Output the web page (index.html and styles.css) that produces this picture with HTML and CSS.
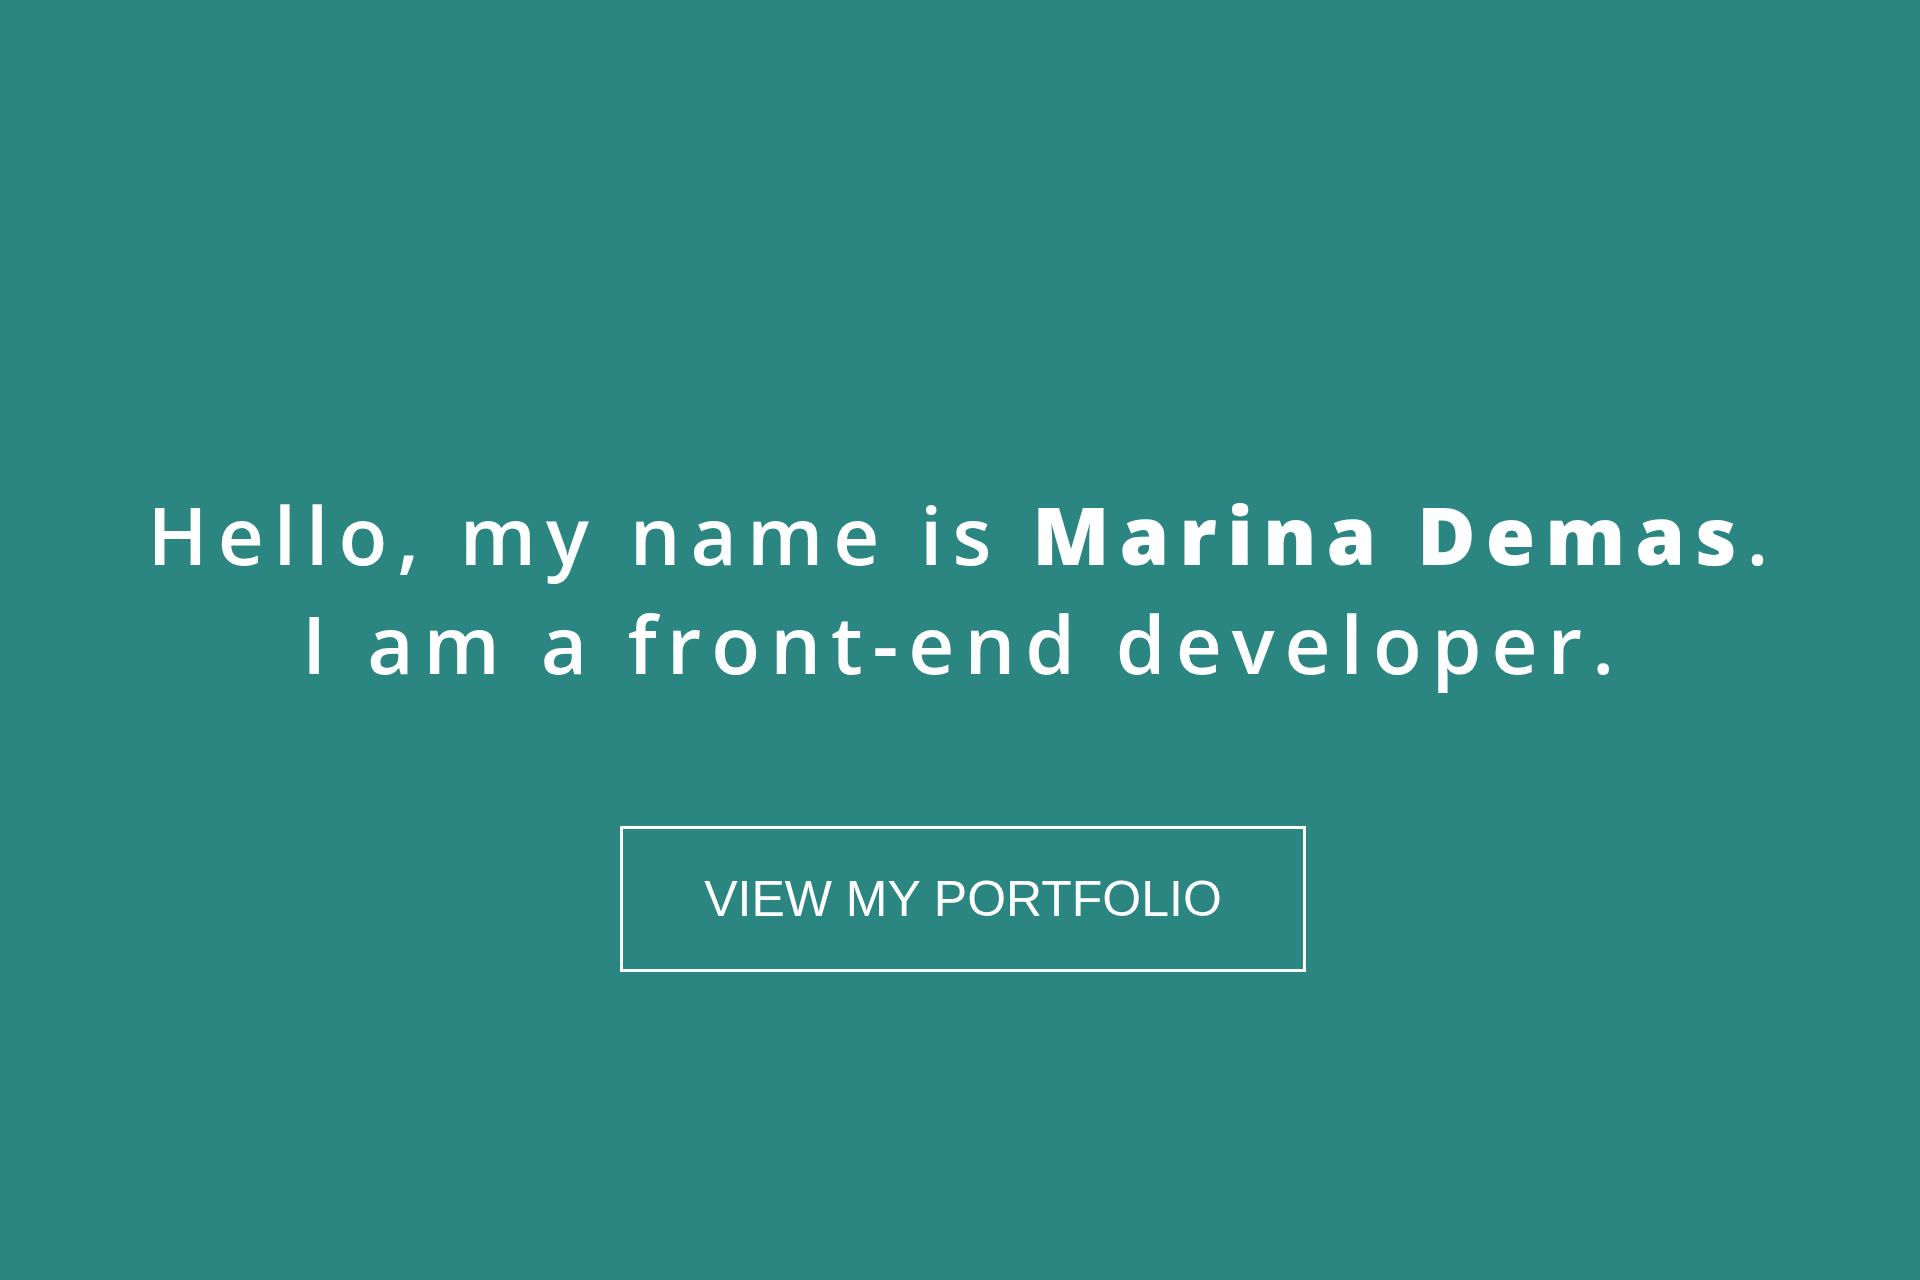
FILE: index.html
```html
<!DOCTYPE html>
<html lang="en">
<head>
<meta charset="utf-8">
<title>Marina Demas</title>
<link rel="stylesheet" href="styles.css">
</head>
<body>
<main class="hero">
  <h1 class="hero-title">Hello, my name is <strong>Marina Demas</strong>.<br>I am a front-end developer.</h1>
  <a class="hero-button" href="#portfolio">VIEW MY PORTFOLIO</a>
</main>
</body>
</html>
```

FILE: styles.css
```css
html, body {
  margin: 0;
  padding: 0;
  height: 100%;
}

body {
  background: #2b8681;
  color: #ffffff;
}

.hero {
  box-sizing: border-box;
  min-height: 1280px;
  display: flex;
  flex-direction: column;
  align-items: center;
  padding-top: 479px;
  padding-left: 6px;
}

.hero-title {
  margin: 0;
  font-family: "Open Sans", sans-serif;
  font-size: 80px;
  font-weight: 600;
  line-height: normal;
  letter-spacing: 10px;
  text-align: center;
  color: #ffffff;
}

.hero-title strong {
  font-weight: 800;
}

.hero-button {
  box-sizing: border-box;
  margin-top: 129px;
  width: 686px;
  height: 146px;
  border: 3px solid #ffffff;
  display: flex;
  align-items: center;
  justify-content: center;
  font-family: "Liberation Sans", Arial, sans-serif;
  font-size: 50px;
  color: #ffffff;
  text-decoration: none;
}
```
